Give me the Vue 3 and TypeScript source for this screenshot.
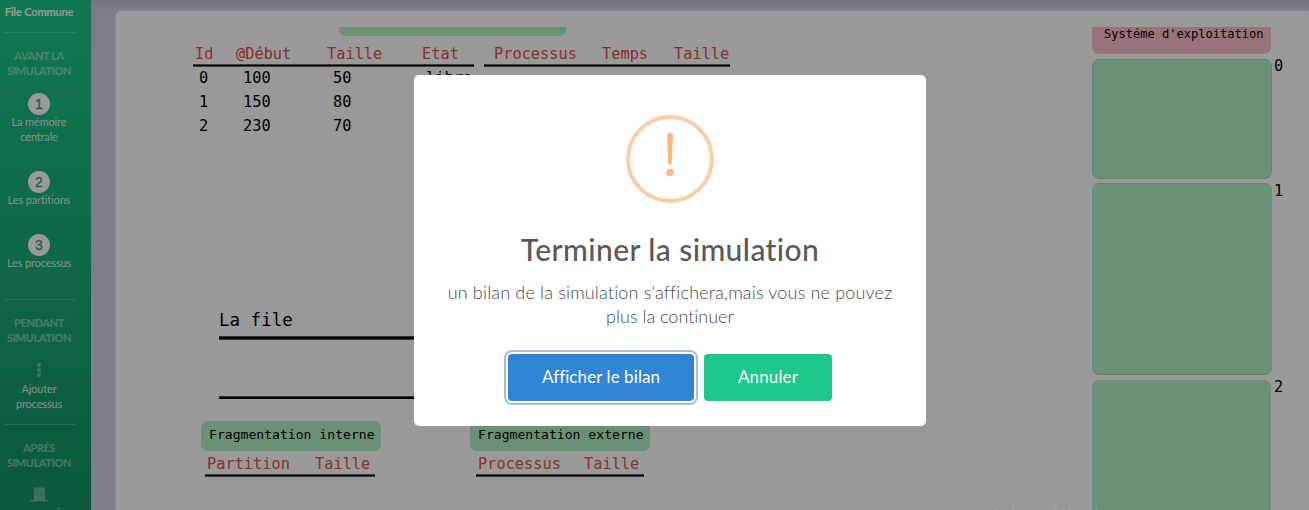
<script setup lang="ts">
interface Partition {
  id: number
  start: number
  size: number
  state: string
}

const partitions: Partition[] = [
  { id: 0, start: 100, size: 50, state: 'libre' },
  { id: 1, start: 150, size: 80, state: 'libre' },
  { id: 2, start: 230, size: 70, state: 'libre' },
]
</script>

<template>
  <div class="page">
    <aside class="sidebar">
      <div class="brand"><span>File Commune</span></div>
      <hr />
      <h6 class="first"><span>AVANT LA</span><span>SIMULATION</span></h6>
      <a class="step s1"><b>1</b><span>La mémoire</span><span>centrale</span></a>
      <a class="step s2"><b>2</b><span>Les partitions</span></a>
      <a class="step s3"><b>3</b><span>Les processus</span></a>
      <hr />
      <h6><span>PENDANT</span><span>SIMULATION</span></h6>
      <a class="step s4">
        <svg class="dots" width="6" height="16" viewBox="0 0 6 16"><circle cx="3" cy="3" r="2.2" /><circle cx="3" cy="8" r="2.2" /><circle cx="3" cy="13" r="2.2" /></svg>
        <span>Ajouter</span><span>processus</span>
      </a>
      <hr />
      <h6><span>APRÉS</span><span>SIMULATION</span></h6>
      <svg class="door" width="18" height="15" viewBox="0 0 18 15"><path fill-rule="evenodd" d="M4 1.2Q4 .5 4.700 .5h9.600q.7 0 .7.7V13h3v1.600H0V13h4zM11.500 6.400a.9.9 0 1 0 0 1.800.9.9 0 0 0 0-1.800z" /></svg>
      <i class="tick"></i>
    </aside>

    <main>
      <section class="card">
        <div class="work">
          <div class="tab-title"></div>
          <div class="tables">
            <div class="table t-part">
              <div class="head"><span>Id</span><span>@Début</span><span>Taille</span><span>Etat</span></div>
              <div v-for="p in partitions" :key="p.id" class="row">
                <span>{{ p.id }}</span><span>{{ p.start }}</span><span>{{ p.size }}</span><span>{{ p.state }}</span>
              </div>
            </div>
            <div class="table t-proc">
              <div class="head"><span>Processus</span><span>Temps</span><span>Taille</span></div>
            </div>
          </div>
          <div class="queue"><span>La file</span></div>
          <div class="frags">
            <div class="frag">
              <div class="pill">Fragmentation interne</div>
              <div class="head"><span>Partition</span><span>Taille</span></div>
            </div>
            <div class="frag ext">
              <div class="pill">Fragmentation externe</div>
              <div class="head"><span>Processus</span><span>Taille</span></div>
            </div>
          </div>
        </div>
        <div class="memory">
          <div class="os"><span>Systéme d'exploitation</span></div>
          <div class="slot m0"><div class="block"></div><span>0</span></div>
          <div class="slot m1"><div class="block"></div><span>1</span></div>
          <div class="slot m2"><div class="block"></div><span>2</span></div>
        </div>
      </section>
    </main>

    <div class="overlay">
      <div class="modal">
        <svg class="warn" width="88" height="88" viewBox="0 0 88 88">
          <circle cx="44" cy="44" r="42" fill="none" stroke="#facea8" stroke-width="4" />
          <path d="M41 20.500Q41 18 44 18t3 2.500L45.800 48.500Q45.700 50 44 50t-1.800-1.500z" fill="#f9b985" />
          <circle cx="44" cy="57.500" r="3.800" fill="#f9b985" />
        </svg>
        <h2>Terminer la simulation</h2>
        <p><span class="l1">un bilan de la simulation s'affichera,mais vous ne pouvez</span><span>plus la continuer</span></p>
        <div class="actions">
          <button class="ok">Afficher le bilan</button>
          <button class="cancel">Annuler</button>
        </div>
      </div>
    </div>
    <div class="watermark">Activer Windows</div>
  </div>
</template>

<style>
body { margin: 0; overflow: hidden; }
</style>

<style scoped>
* { box-sizing: border-box; }
.page {
  position: relative;
  display: grid;
  grid-template-columns: 91px 1fr;
  width: 1309px;
  height: 510px;
  overflow: hidden;
  background: #d1d3e2;
  font-family: Lato, "Open Sans", sans-serif;
  font-variant-ligatures: none;
}
.sidebar {
  display: flex;
  flex-direction: column;
  align-items: center;
  height: 510px;
  padding: 4px 13px 0 0;
  overflow: hidden;
  background: linear-gradient(180deg, #1cc78a, #159467);
  color: rgba(255, 255, 255, .85);
  font-size: 11px;
  line-height: 15px;
  letter-spacing: -.15px;
}
.sidebar span { display: block; white-space: nowrap; }
.brand { flex: none; height: 15px; color: #fff; font-weight: 700; }
hr { flex: none; width: 72px; height: 1px; margin: 13px 0 0 1px; border: 0; background: rgba(255, 255, 255, .22); }
h6 { flex: none; margin: 15px 0 0; font-size: 11px; line-height: 15px; font-weight: 900; letter-spacing: -.42px; text-align: center; color: rgba(255, 255, 255, .42); }
h6.first { margin: 15px 0 1px; }
.step { flex: none; display: flex; flex-direction: column; align-items: center; }
.step b {
  width: 22px;
  height: 22px;
  margin-bottom: -1px;
  border-radius: 50%;
  background: #fff;
  color: #4b9c7b;
  font: 400 14px/22px "Liberation Sans", Arial, sans-serif;
  -webkit-text-stroke: .4px #4b9c7b;
  letter-spacing: 0;
  text-align: center;
}
.s1 { margin-top: 14px; }
.s2 { margin-top: 27px; }
.s3 { margin-top: 27px; margin-bottom: 16px; }
.s4 { margin-top: 17px; }
.dots { fill: rgba(255, 255, 255, .32); margin-bottom: 3px; }
.door { flex: none; fill: rgba(255, 255, 255, .35); margin-top: 17px; }
.tick { width: 1px; height: 1px; margin: 6px 0 0 38px; background: #fff; }

main { padding: 11px 0 0 25px; box-shadow: inset 0 8px 10px -6px rgba(58, 40, 90, .12); }
.card {
  display: flex;
  height: 520px;
  padding-top: 16px;
  border-radius: 5px 0 0 0;
  background: #fff;
  box-shadow: 0 0 0 1px #e0dfe8;
  font-family: "DejaVu Sans Mono", "Liberation Mono", monospace;
  font-size: 15.3px;
  white-space: pre;
  color: #000;
}
.work { width: 976px; flex: none; }
.tab-title { width: 227px; height: 9px; margin-left: 223px; border-radius: 0 0 7px 7px; background: #b2f0c5; }
.tables { display: flex; gap: 10px; height: 270px; padding: 5px 0 0 77px; }
.head { display: grid; height: 24px; line-height: 25px; color: #e45150; border-bottom: 1px solid #000; box-shadow: 0 1px rgba(0, 0, 0, .6), inset 0 -1px rgba(0, 0, 0, .6); }
.t-part { width: 281px; }
.t-proc { width: 246px; }
.t-part .head { grid-template-columns: 41px 91px 95px 1fr; padding-left: 2px; height: 25px; line-height: 27px; }
.t-proc .head { grid-template-columns: 108px 72px 1fr; padding-left: 10px; height: 25px; line-height: 27px; }
.row { display: grid; grid-template-columns: 44px 90px 93px 1fr; padding-left: 6px; height: 24px; line-height: 24px; }
.queue {
  width: 480px;
  height: 91px;
  margin: 3px 0 0 103px;
  font-size: 17.5px;
  line-height: 22px;
  background:
    linear-gradient(#000, #000) 0 28px / 100% 2px no-repeat,
    linear-gradient(#5a5a5a, #5a5a5a) 0 27px / 100% 4px no-repeat,
    linear-gradient(#000, #000) 0 88px / 100% 2px no-repeat,
    linear-gradient(#5a5a5a, #5a5a5a) 0 87px / 100% 3px no-repeat;
}
.queue span { display: block; }
.frags { display: flex; gap: 89px; padding: 22px 0 0 85px; }
.frag { width: 180px; }
.pill { height: 30px; margin-top: -1px; margin-bottom: 1px; border-radius: 7px; background: #b2f0c5; padding-left: 8px; font-size: 13.1px; line-height: 27px; }
.frag .head { grid-template-columns: 108px 1fr; width: 170px; margin-left: 4px; padding-left: 2px; }
.frag.ext .head { grid-template-columns: 106px 1fr; width: 168px; margin-left: 6px; }

.memory { width: 205px; flex: none; }
.os { width: 179px; height: 27px; border-radius: 0 0 7px 7px; background: #ffc0cb; padding-left: 12px; font-size: 12.05px; line-height: 14px; }
.slot { display: flex; gap: 2px; line-height: 15px; }
.block { width: 180px; border-radius: 7px; background: #b2f0c5; border: 1px solid #9ee0c0; }
.m0 { height: 120px; margin-top: 5px; }
.m1 { height: 192px; margin-top: 4px; line-height: 17px; }
.m1 .block { border-color: #9ee0c0 #acebc2 #9fd8b0; }
.m2 { height: 196px; margin-top: 5px; gap: 3px; }
.m2 .block { width: 179px; border-color: #b2f0c5; }

.overlay { position: absolute; inset: 0; background: rgba(0, 0, 0, .4); padding: 75px 0 0 414px; }
.modal {
  display: flex;
  flex-direction: column;
  align-items: center;
  width: 512px;
  height: 351px;
  padding-top: 40px;
  border-radius: 5px;
  background: #fff;
  white-space: nowrap;
}
h2 { margin: 26px 0 0; font-size: 30px; line-height: 40px; font-weight: 500; letter-spacing: .42px; color: #595959; }
p { display: flex; flex-direction: column; align-items: center; margin: 11px 0 0; font-size: 18px; line-height: 24px; font-weight: 300; color: #484848; }
.l1 { letter-spacing: .175px; }
.actions { display: flex; gap: 10px; margin-top: 26px; }
button { height: 47px; padding: 0 0 2px; border: 0; border-radius: 4px; color: #fff; font-family: inherit; font-size: 17px; font-weight: 400; line-height: 45px; font-variant-ligatures: none; }
.ok { width: 186px; letter-spacing: .08px; background: #3085d6; box-shadow: 0 0 0 2px #fff, 0 0 0 4px #a9c0da; }
.cancel { width: 128px; letter-spacing: .15px; background: #1cc88a; }
.watermark {
  position: absolute;
  left: 990px;
  top: 500px;
  font: 18.6px/26px "Open Sans", sans-serif;
  color: rgba(190, 190, 190, .35);
  white-space: nowrap;
}
</style>
